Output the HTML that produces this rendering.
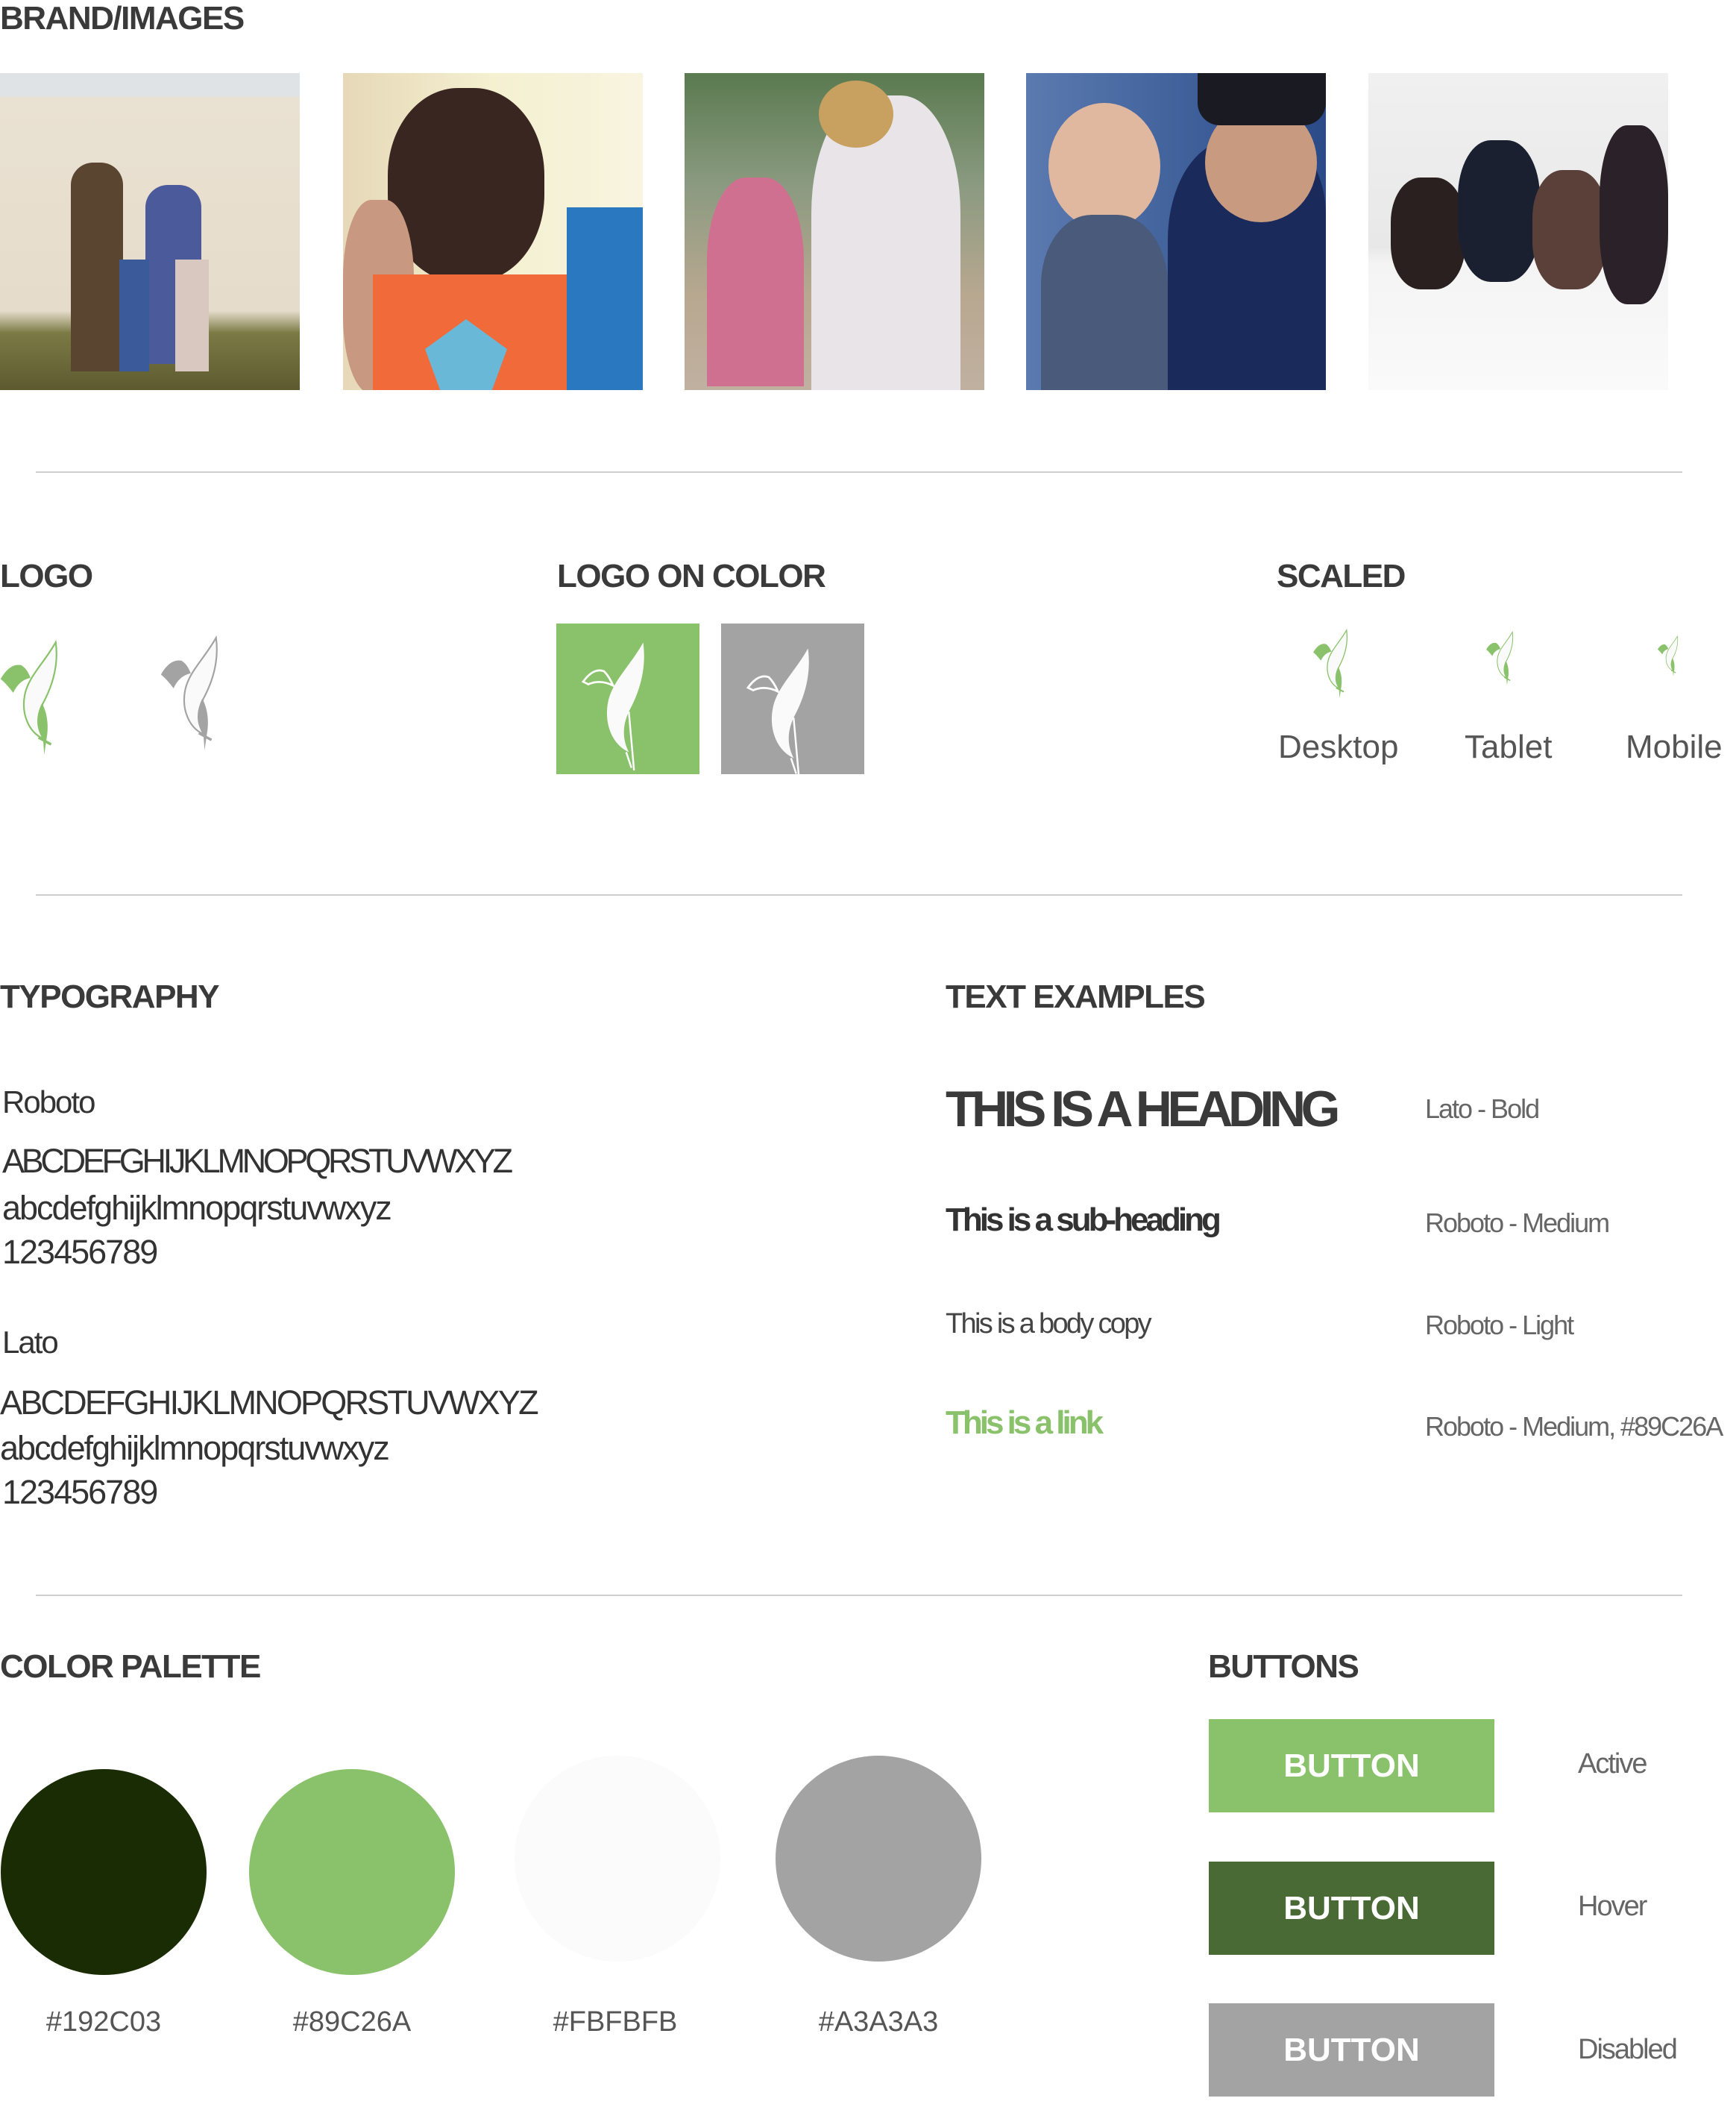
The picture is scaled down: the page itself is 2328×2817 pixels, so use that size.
<!DOCTYPE html>
<html><head><meta charset="utf-8">
<style>
body{margin:0;width:2328px;height:2817px;background:#fff;position:relative;overflow:hidden;font-family:"Liberation Sans",sans-serif;color:#3b3b3b}
.a{position:absolute;white-space:nowrap}
.h{font-weight:bold;font-size:44px;color:#3a3a3a;letter-spacing:-1.5px}
.line{position:absolute;left:48px;width:2208px;height:2px;background:#cfcfcf}
.img{position:absolute;top:98px;width:402px;height:425px;overflow:hidden}
.t{font-size:45px;color:#333;letter-spacing:-2px}
.lb{font-size:36px;color:#666;letter-spacing:-2px}
.btn{position:absolute;left:1621px;width:383px;height:125px;color:#fff;font-weight:bold;font-size:44px;text-align:center;line-height:125px}
.circ{position:absolute;width:276px;height:276px;border-radius:50%}
.cl{font-size:38px;color:#555;text-align:center;width:300px}
</style></head><body>
<svg width="0" height="0" style="position:absolute">
<defs>
<symbol id="logo" viewBox="0 0 60 100">
<path d="M0 34 Q8 20 18 22 Q23 25 26 33 Q16 35 11 46 Q5 38 0 34Z" fill="currentColor"/>
<path d="M48 2 C51 24 44 42 37 55 C32 66 32 76 37 86 C24 80 18 64 21 48 C24 32 38 20 48 2Z" fill="#fafafa" stroke="currentColor" stroke-width="1.4"/>
<path d="M36 55 C30 67 31 78 37 86 L38 100 L40 86 C42 76 41 64 36 55Z" fill="currentColor"/>
<path d="M33 85 L44 91" stroke="currentColor" stroke-width="2.2"/>
</symbol>
<symbol id="logow" viewBox="0 0 60 100">
<path d="M2 32 Q10 21 18 24 Q22 28 25 35 Q15 30 6 34 Q4 33 2 32Z" fill="none" stroke="#fff" stroke-width="1.6"/>
<path d="M48 2 C51 24 44 42 37 55 C32 66 32 76 37 86 C24 80 18 64 21 48 C24 32 38 20 48 2Z" fill="#fafafa"/>
<path d="M37 55 L41 100 M35 86 L39 98" stroke="#fff" stroke-width="1.4" fill="none"/>
</symbol>
</defs></svg>

<div class="a h" style="left:0;top:0">BRAND/IMAGES</div>
<div class="img" style="left:0;background:linear-gradient(#dfe3e6 0,#dfe3e6 7%,#e9e1d2 8%,#e6dccb 75%,#7a7a45 82%,#5e5a30 100%)">
 <div style="position:absolute;left:95px;top:120px;width:70px;height:280px;background:#5a4530;border-radius:30px 30px 0 0"></div>
 <div style="position:absolute;left:195px;top:150px;width:75px;height:240px;background:#4a5a9a;border-radius:30px 30px 0 0"></div>
 <div style="position:absolute;left:160px;top:250px;width:40px;height:150px;background:#3a5a9a"></div>
 <div style="position:absolute;left:235px;top:250px;width:45px;height:150px;background:#d8c8c0"></div>
</div>
<div class="img" style="left:460px;background:linear-gradient(90deg,#e6d8b8,#f4f0d0 50%,#f8f4e0)">
 <div style="position:absolute;left:60px;top:20px;width:210px;height:260px;background:#3a2620;border-radius:45%"></div>
 <div style="position:absolute;left:0;top:170px;width:95px;height:260px;background:#c89880;border-radius:40%"></div>
 <div style="position:absolute;left:40px;top:270px;width:270px;height:160px;background:#f06a3a"></div>
 <div style="position:absolute;left:300px;top:180px;width:102px;height:250px;background:#2a78c0"></div>
 <div style="position:absolute;left:110px;top:330px;width:110px;height:100px;background:#6ab8d8;clip-path:polygon(50% 0,100% 40%,80% 100%,20% 100%,0 40%)"></div>
</div>
<div class="img" style="left:918px;background:linear-gradient(#5a7a50,#8a9a80 35%,#b8a890 70%,#c0b0a0)">
 <div style="position:absolute;left:170px;top:30px;width:200px;height:395px;background:#e8e4e8;border-radius:40% 40% 0 0"></div>
 <div style="position:absolute;left:30px;top:140px;width:130px;height:280px;background:#d07090;border-radius:40% 40% 0 0"></div>
 <div style="position:absolute;left:180px;top:10px;width:100px;height:90px;background:#c8a060;border-radius:50%"></div>
</div>
<div class="img" style="left:1376px;background:linear-gradient(90deg,#5a7ab0,#2a4a88)">
 <div style="position:absolute;left:190px;top:90px;width:212px;height:335px;background:#1a2a5a;border-radius:40% 30% 0 0"></div>
 <div style="position:absolute;left:240px;top:40px;width:150px;height:160px;background:#c89a80;border-radius:50%"></div>
 <div style="position:absolute;left:230px;top:0;width:172px;height:70px;background:#1a1a22;border-radius:0 0 30px 30px"></div>
 <div style="position:absolute;left:30px;top:40px;width:150px;height:170px;background:#e0b8a0;border-radius:50%"></div>
 <div style="position:absolute;left:20px;top:190px;width:170px;height:235px;background:#4a5a7a;border-radius:40% 40% 0 0"></div>
</div>
<div class="img" style="left:1835px;background:linear-gradient(#f0f0f0,#e8e8e8 55%,#f4f4f4 60%,#fafafa)">
 <div style="position:absolute;left:30px;top:140px;width:100px;height:150px;background:#2a2020;border-radius:40%"></div>
 <div style="position:absolute;left:120px;top:90px;width:110px;height:190px;background:#1a2030;border-radius:40%"></div>
 <div style="position:absolute;left:220px;top:130px;width:100px;height:160px;background:#5a4038;border-radius:40%"></div>
 <div style="position:absolute;left:310px;top:70px;width:92px;height:240px;background:#2a2228;border-radius:40%"></div>
</div>

<div class="line" style="top:632px"></div>

<div class="a h" style="left:0;top:748px">LOGO</div>
<div class="a h" style="left:747px;top:748px">LOGO ON COLOR</div>
<div class="a h" style="left:1712px;top:748px">SCALED</div>
<svg class="a" style="left:0;top:858px;color:#89C26A" width="94" height="154"><use href="#logo"/></svg>
<svg class="a" style="left:215px;top:852px;color:#a3a3a3" width="94" height="154"><use href="#logo"/></svg>
<div class="a" style="left:746px;top:836px;width:192px;height:202px;background:#89C26A"><svg style="position:absolute;left:30px;top:22px" width="110" height="175"><use href="#logow"/></svg></div>
<div class="a" style="left:967px;top:836px;width:192px;height:202px;background:#a3a3a3"><svg style="position:absolute;left:30px;top:30px" width="110" height="175"><use href="#logow"/></svg></div>
<svg class="a" style="left:1760px;top:843px;color:#89C26A" width="58" height="93"><use href="#logo"/></svg>
<svg class="a" style="left:1992px;top:846px;color:#89C26A" width="46" height="73"><use href="#logo"/></svg>
<svg class="a" style="left:2222px;top:852px;color:#89C26A" width="35" height="55"><use href="#logo"/></svg>
<div class="a" style="left:1714px;top:977px;font-size:44px;color:#555">Desktop</div>
<div class="a" style="left:1964px;top:977px;font-size:44px;color:#555">Tablet</div>
<div class="a" style="left:2180px;top:977px;font-size:44px;color:#555">Mobile</div>

<div class="line" style="top:1199px"></div>

<div class="a h" style="left:0;top:1312px">TYPOGRAPHY</div>
<div class="a h" style="left:1268px;top:1312px">TEXT EXAMPLES</div>
<div class="a t" style="left:3px;top:1454px;font-size:42px">Roboto</div>
<div class="a t" style="left:3px;top:1531px;letter-spacing:-4.3px">ABCDEFGHIJKLMNOPQRSTUVWXYZ</div>
<div class="a t" style="left:3px;top:1594px">abcdefghijklmnopqrstuvwxyz</div>
<div class="a t" style="left:3px;top:1653px">123456789</div>
<div class="a t" style="left:3px;top:1776px;font-size:42px">Lato</div>
<div class="a t" style="left:0;top:1855px;letter-spacing:-2.8px">ABCDEFGHIJKLMNOPQRSTUVWXYZ</div>
<div class="a t" style="left:0;top:1916px">abcdefghijklmnopqrstuvwxyz</div>
<div class="a t" style="left:3px;top:1975px">123456789</div>

<div class="a" style="left:1268px;top:1448px;font-size:68px;font-weight:bold;color:#3a3a3a;letter-spacing:-6.5px">THIS IS A HEADING</div>
<div class="a" style="left:1268px;top:1611px;font-size:44px;font-weight:bold;color:#333;letter-spacing:-4px">This is a sub-heading</div>
<div class="a" style="left:1268px;top:1754px;font-size:38px;color:#444;letter-spacing:-2.7px">This is a body copy</div>
<div class="a" style="left:1268px;top:1883px;font-size:44px;font-weight:bold;color:#89C26A;letter-spacing:-4px">This is a link</div>
<div class="a lb" style="left:1911px;top:1466px">Lato - Bold</div>
<div class="a lb" style="left:1911px;top:1619px">Roboto - Medium</div>
<div class="a lb" style="left:1911px;top:1756px">Roboto - Light</div>
<div class="a lb" style="left:1911px;top:1892px">Roboto - Medium, #89C26A</div>

<div class="line" style="top:2138px"></div>

<div class="a h" style="left:0;top:2210px">COLOR PALETTE</div>
<div class="a h" style="left:1620px;top:2210px">BUTTONS</div>
<div class="circ" style="left:1px;top:2372px;background:#192C03"></div>
<div class="circ" style="left:334px;top:2372px;background:#89C26A"></div>
<div class="circ" style="left:690px;top:2354px;background:#FBFBFB"></div>
<div class="circ" style="left:1040px;top:2354px;background:#A3A3A3"></div>
<div class="a cl" style="left:-11px;top:2690px">#192C03</div>
<div class="a cl" style="left:322px;top:2690px">#89C26A</div>
<div class="a cl" style="left:675px;top:2690px">#FBFBFB</div>
<div class="a cl" style="left:1028px;top:2690px">#A3A3A3</div>

<div class="btn" style="top:2305px;background:#89C26A">BUTTON</div>
<div class="btn" style="top:2496px;background:#4A6A35">BUTTON</div>
<div class="btn" style="top:2686px;background:#A3A3A3">BUTTON</div>
<div class="a lb" style="left:2116px;top:2344px;font-size:38px">Active</div>
<div class="a lb" style="left:2116px;top:2535px;font-size:38px">Hover</div>
<div class="a lb" style="left:2116px;top:2727px;font-size:38px">Disabled</div>
</body></html>
